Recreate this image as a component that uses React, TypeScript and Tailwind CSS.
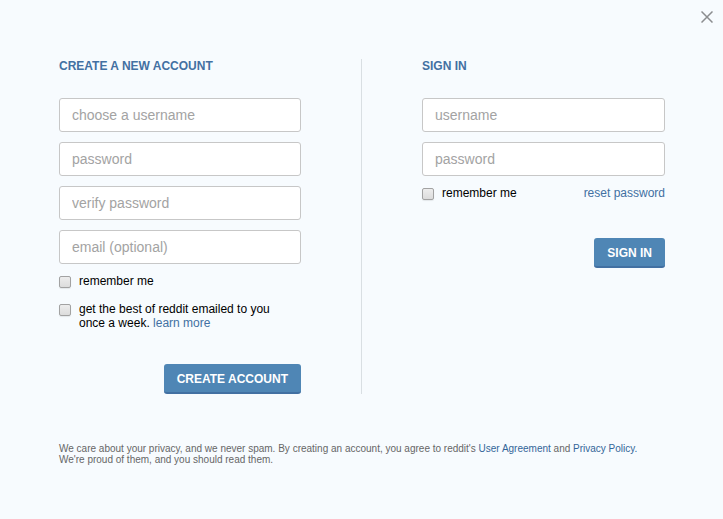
import React from "react";

type FieldProps = {
  label: string;
  name: string;
  type?: string;
};

const Field = ({ label, name, type = "text" }: FieldProps) => (
  <input
    name={name}
    type={type}
    aria-label={label}
    placeholder={label}
    className="block h-[34px] w-full rounded-[3px] border border-[#c7c7c7] bg-white px-3 text-sm text-[#222222] placeholder:text-[#a3a3a3] outline-none focus:border-[#4f86b5]"
  />
);

const Checkbox = ({ id }: { id: string }) => (
  <input
    id={id}
    type="checkbox"
    className="mt-0.5 h-3 w-3 shrink-0 appearance-none rounded-[2px] border border-[#a2a2a2] bg-linear-to-b from-[#ededed] to-[#dcdcdc] shadow-[0_1px_1px_rgba(0,0,0,0.08)] checked:bg-[#4f86b5]"
  />
);

const SubmitButton = ({ children }: { children: React.ReactNode }) => (
  <button
    type="submit"
    className="h-[30px] rounded-[3px] border-b-2 border-[#4270a2] bg-[#4f86b5] px-[13px] pt-0.5 font-bold text-white uppercase"
  >
    {children}
  </button>
);

const App = () => {
  return (
    <div className="relative min-h-screen bg-[#f7fbfe] pt-[59px] pr-[58px] pl-[59px] font-['Liberation_Sans',Arial,sans-serif] text-xs leading-[14px] text-black">
      <button
        type="button"
        aria-label="close"
        className="absolute top-[11px] right-[10px] text-[#8b8d8f]"
      >
        <svg width="12" height="12" viewBox="0 0 12 12" fill="none">
          <path d="M0.5 0.5L11.5 11.5M11.5 0.5L0.5 11.5" stroke="currentColor" strokeWidth="1.5" />
        </svg>
      </button>

      <div className="grid grid-cols-2">
        <form
          className="border-r border-[#d9dfe3] pr-[60px]"
          onSubmit={(e) => e.preventDefault()}
        >
          <h3 className="mb-[25px] font-bold text-[#4270a2] uppercase">
            Create a new account
          </h3>
          <div className="space-y-2.5">
            <Field name="user" label="choose a username" />
            <Field name="passwd" label="password" type="password" />
            <Field name="passwd2" label="verify password" type="password" />
            <Field name="email" label="email (optional)" type="email" />
          </div>
          <div className="mt-2.5 flex gap-2">
            <Checkbox id="rem_reg" />
            <label htmlFor="rem_reg">remember me</label>
          </div>
          <div className="mt-3.5 flex gap-2">
            <Checkbox id="newsletter" />
            <p>
              <label htmlFor="newsletter">
                get the best of reddit emailed to you
                <br />
                once a week.
              </label>{" "}
              <a href="#learn" className="text-[#4270a2]">
                learn more
              </a>
            </p>
          </div>
          <div className="mt-[34px] flex justify-end">
            <SubmitButton>Create account</SubmitButton>
          </div>
        </form>

        <form className="pl-[60px]" onSubmit={(e) => e.preventDefault()}>
          <h3 className="mb-[25px] font-bold text-[#4270a2] uppercase">
            Sign in
          </h3>
          <div className="space-y-2.5">
            <Field name="user" label="username" />
            <Field name="passwd" label="password" type="password" />
          </div>
          <div className="mt-2.5 flex gap-2">
            <Checkbox id="rem_login" />
            <label htmlFor="rem_login">remember me</label>
            <a href="#reset" className="ml-auto text-[#4270a2]">
              reset password
            </a>
          </div>
          <div className="mt-[38px] flex justify-end">
            <SubmitButton>Sign in</SubmitButton>
          </div>
        </form>
      </div>

      <p className="mt-[49px] text-[10px] leading-[11px] text-[#666666]">
        We care about your privacy, and we never spam. By creating an account,
        you agree to reddit's{" "}
        <a href="#agreement" className="text-[#336699]">
          User Agreement
        </a>{" "}
        and{" "}
        <a href="#privacy" className="text-[#336699]">
          Privacy Policy.
        </a>{" "}
        <br />
        We're proud of them, and you should read them.
      </p>
    </div>
  );
};

export default App;
